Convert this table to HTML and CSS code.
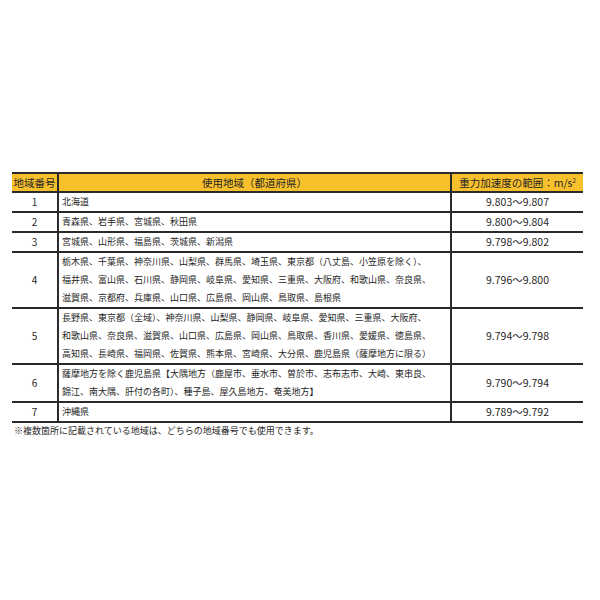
FILE: index.html
```html
<!DOCTYPE html>
<html lang="ja">
<head>
<meta charset="utf-8">
<link rel="stylesheet" href="styles.css">
</head>
<body>
<div class="page">
  <table class="grav">
    <colgroup>
      <col class="c1"><col class="c2"><col class="c3">
    </colgroup>
    <thead>
      <tr>
        <th>地域番号</th>
        <th>使用地域（都道府県）</th>
        <th>重力加速度の範囲：m/s<sup>2</sup></th>
      </tr>
    </thead>
    <tbody>
      <tr><td class="num">1</td><td class="area">北海道</td><td class="val">9.803～9.807</td></tr>
      <tr><td class="num">2</td><td class="area">青森県、岩手県、宮城県、秋田県</td><td class="val">9.800～9.804</td></tr>
      <tr><td class="num">3</td><td class="area">宮城県、山形県、福島県、茨城県、新潟県</td><td class="val">9.798～9.802</td></tr>
      <tr><td class="num">4</td><td class="area">栃木県、千葉県、神奈川県、山梨県、群馬県、埼玉県、東京都（八丈島、小笠原を除く）、<br>福井県、富山県、石川県、静岡県、岐阜県、愛知県、三重県、大阪府、和歌山県、奈良県、<br>滋賀県、京都府、兵庫県、山口県、広島県、岡山県、鳥取県、島根県</td><td class="val">9.796～9.800</td></tr>
      <tr><td class="num">5</td><td class="area">長野県、東京都（全域）、神奈川県、山梨県、静岡県、岐阜県、愛知県、三重県、大阪府、<br>和歌山県、奈良県、滋賀県、山口県、広島県、岡山県、鳥取県、香川県、愛媛県、徳島県、<br>高知県、長崎県、福岡県、佐賀県、熊本県、宮崎県、大分県、鹿児島県（薩摩地方に限る）</td><td class="val">9.794～9.798</td></tr>
      <tr><td class="num">6</td><td class="area">薩摩地方を除く鹿児島県【大隅地方（鹿屋市、垂水市、曽於市、志布志市、大崎、東串良、<br>錦江、南大隅、肝付の各町）、種子島、屋久島地方、奄美地方】</td><td class="val">9.790～9.794</td></tr>
      <tr><td class="num">7</td><td class="area">沖縄県</td><td class="val">9.789～9.792</td></tr>
    </tbody>
  </table>
  <p class="note">※複数箇所に記載されている地域は、どちらの地域番号でも使用できます。</p>
</div>
</body>
</html>
```
FILE: styles.css
```css
html, body {
  margin: 0;
  padding: 0;
  background: #ffffff;
}
.page {
  display: flex;
  flex-direction: column;
  padding: 172px 0 0 12px;
  font-family: "Noto Sans CJK JP", "Noto Sans", sans-serif;
  color: #262626;
}
.grav {
  width: 571px;
  border-collapse: collapse;
  table-layout: fixed;
}
.c1 { width: 46px; }
.c2 { width: 393px; }
.c3 { width: 132px; }
.grav th {
  background: #f8c12c;
  font-weight: normal;
  font-size: 10.5px;
  line-height: 17px;
  padding: 0;
  border-top: 2px solid #2b2b2b;
  border-bottom: 2px solid #2b2b2b;
  white-space: nowrap;
}
.grav th sup {
  font-size: 6px;
  vertical-align: 4px;
  line-height: 0;
}
.grav td {
  font-size: 9px;
  line-height: 18px;
  padding: 0;
  border-bottom: 2px solid #2b2b2b;
  vertical-align: middle;
}
.grav th + th,
.grav td + td {
  border-left: 2px solid #2b2b2b;
}
.num, .val {
  text-align: center;
}
.num {
  font-size: 10px !important;
}
.val {
  font-size: 10.5px !important;
}
.area {
  padding-left: 3px !important;
  white-space: nowrap;
}
.note {
  margin: 1px 0 0 2px;
  font-size: 9px;
  line-height: 14px;
}
```
